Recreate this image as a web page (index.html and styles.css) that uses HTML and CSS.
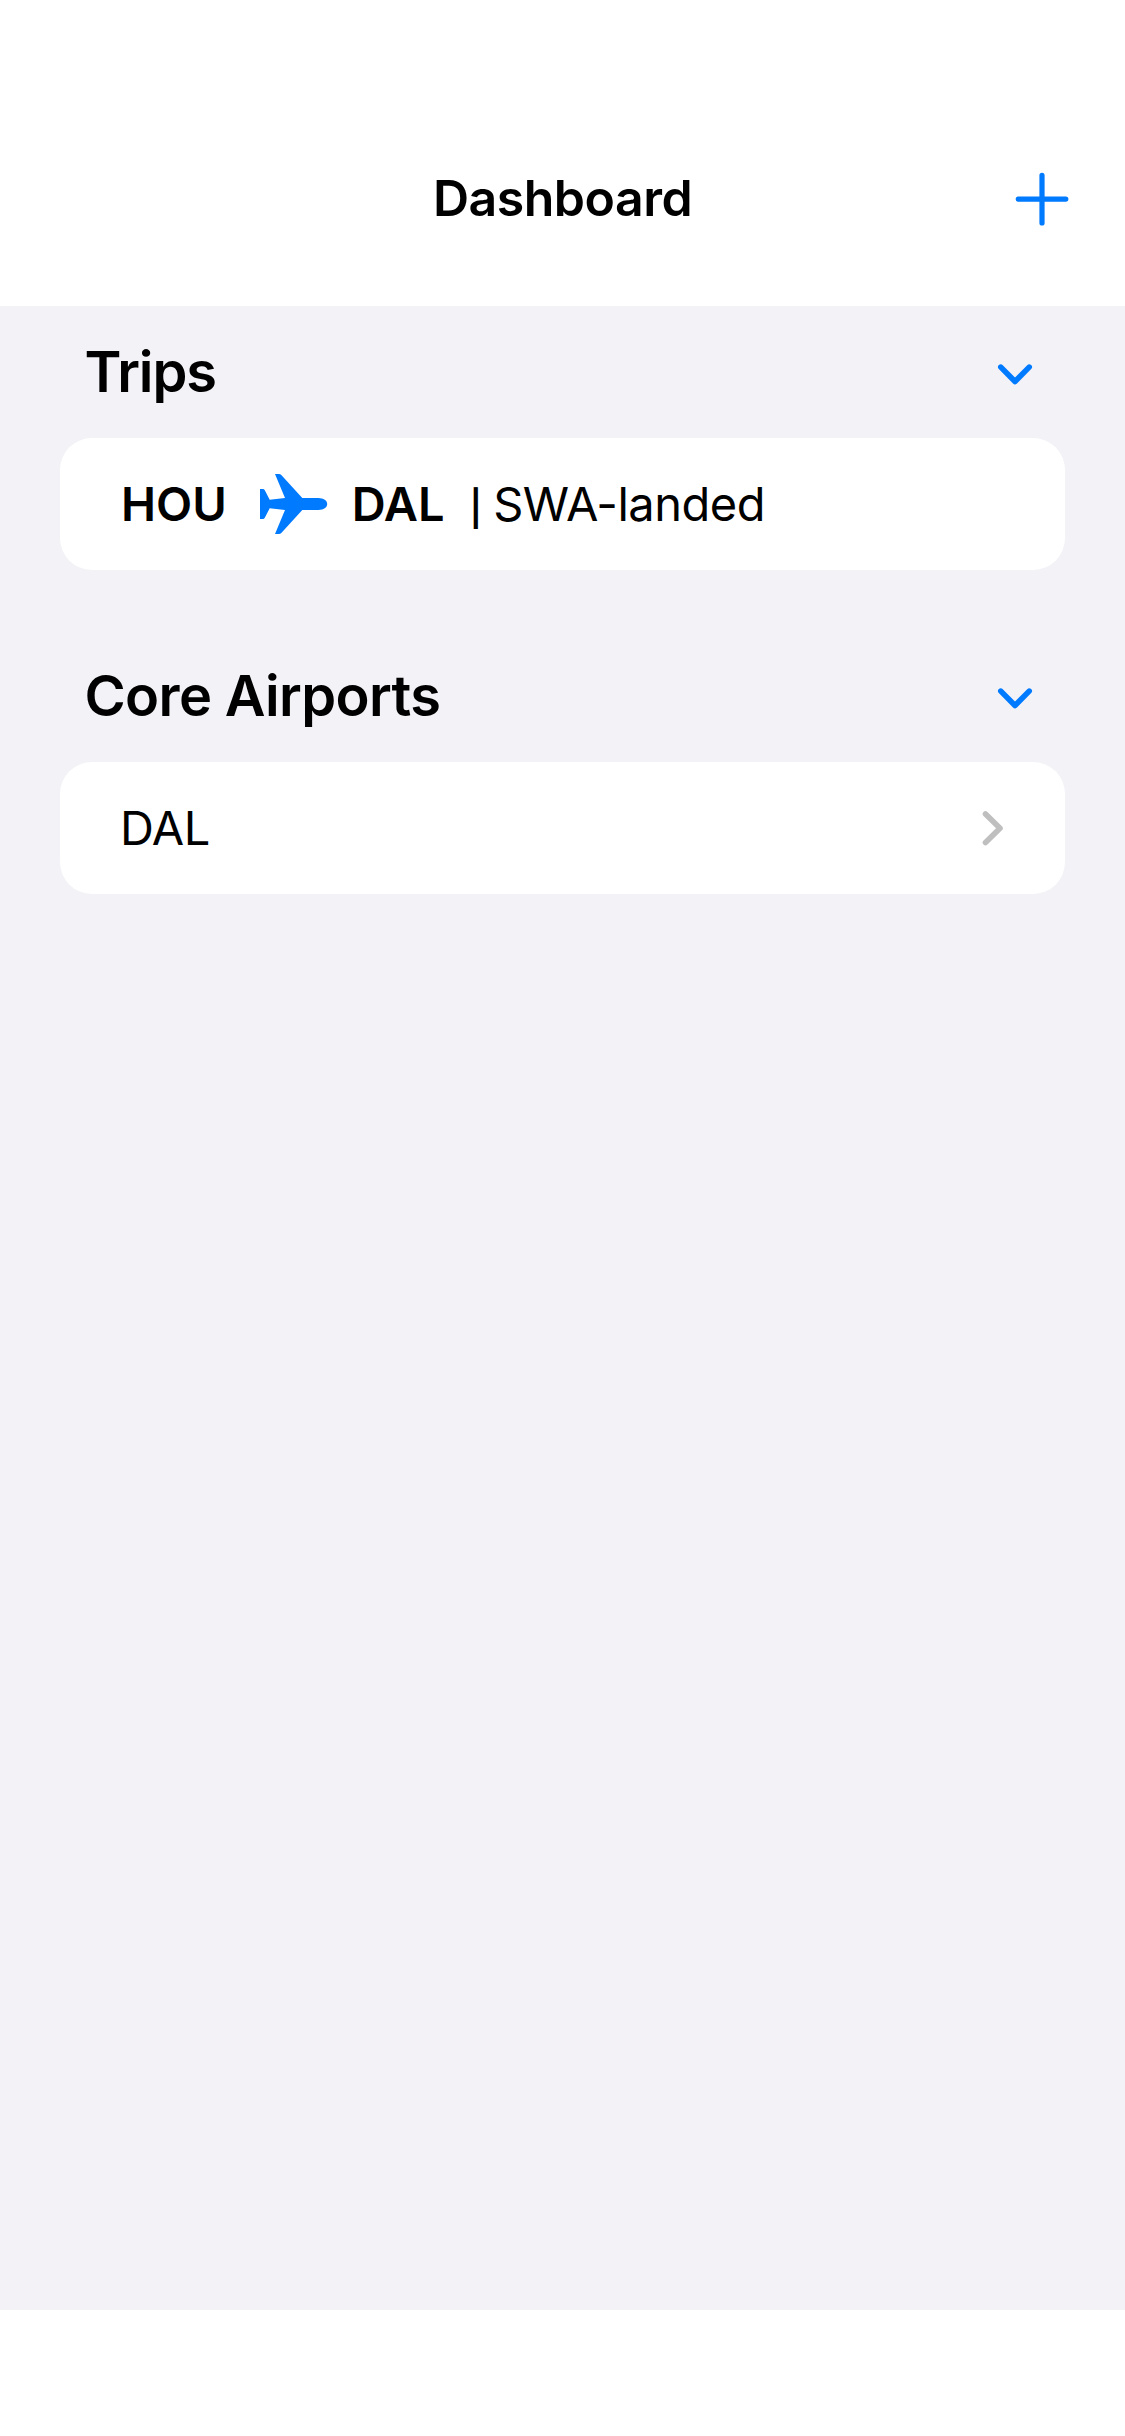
FILE: index.html
```html
<!DOCTYPE html>
<html lang="en">
<head>
<meta charset="utf-8">
<title>Dashboard</title>
<link rel="stylesheet" href="styles.css">
</head>
<body>
<div class="screen">
  <header class="nav">
    <span></span>
    <h1 class="nav-title">Dashboard</h1>
    <button class="nav-add" aria-label="Add">
      <svg width="54" height="54" viewBox="0 0 54 54"><path d="M27 3.300v47.600M3.200 27.100h47.600"/></svg>
    </button>
  </header>
  <main class="content">
    <section>
      <div class="section-head">
        <h2 class="section-title trips">Trips</h2>
        <svg class="chevron" width="36" height="24" viewBox="0 0 36 24"><path d="M3.800 4.100 18 18.500 32.200 4.100"/></svg>
      </div>
      <div class="card">
        <div class="trip">
          <span class="code">HOU</span>
          <svg class="plane" width="68" height="60" viewBox="0 0 68 60"><path d="M15 0h4q1.300 0 2.300 1L42.300 24H58.300C63.500 24.200 67.200 26.500 67.200 30S63.500 35.800 58.300 36H42.300L21.300 59q-1 1-2.300 1H15L25 36 9.700 34.300 4.800 43.700Q4 45 3 45H0V15H3Q4 15 4.800 16.300L9.700 25.700 25 24Z"/></svg>
          <span class="code">DAL</span>
          <span class="divider">|</span>
          <span class="status">SWA-landed</span>
        </div>
      </div>
    </section>
    <section>
      <div class="section-head">
        <h2 class="section-title">Core Airports</h2>
        <svg class="chevron" width="36" height="24" viewBox="0 0 36 24"><path d="M3.800 4.100 18 18.500 32.200 4.100"/></svg>
      </div>
      <div class="card">
        <span class="airport">DAL</span>
        <svg class="disclosure" width="24" height="36" viewBox="0 0 24 36"><path d="M4.500 4 19 18.300 4.500 32.600"/></svg>
      </div>
    </section>
  </main>
</div>
</body>
</html>
```
FILE: styles.css
```css
* {
  box-sizing: border-box;
}

body {
  margin: 0;
  background: #fff;
  color: #000;
  font-family: "Inter", sans-serif;
}

.screen {
  display: flex;
  flex-direction: column;
  height: 2436px;
  padding-bottom: 126px;
}

.nav {
  display: grid;
  flex: none;
  grid-template-columns: 1fr auto 1fr;
  align-content: center;
  align-items: center;
  height: 306px;
  padding: 92px 56px 2px;
}

.nav-title {
  margin: 0;
  font-size: 50px;
  font-weight: 600;
  letter-spacing: -0.5px;
  line-height: 60px;
}

.nav-add {
  justify-self: end;
  margin-top: 2px;
  padding: 0;
  border: 0;
  background: none;
  line-height: 0;
}

.nav-add svg {
  fill: none;
  stroke: #007aff;
  stroke-width: 5.2;
  stroke-linecap: round;
}

.content {
  display: flex;
  flex: 1;
  flex-direction: column;
  gap: 60px;
  padding: 0 60px;
  background: #f2f2f7;
}

.section-head {
  display: flex;
  align-items: center;
  justify-content: space-between;
  height: 132px;
  padding: 0 32px 0 24.5px;
}

.section-title {
  margin: 0;
  font-size: 56px;
  font-weight: 600;
  letter-spacing: -0.65px;
  line-height: 68px;
}

.section-title.trips {
  letter-spacing: -1.1px;
}

.chevron,
.disclosure {
  fill: none;
  stroke: #007aff;
  stroke-width: 5.6;
  stroke-linecap: round;
  stroke-linejoin: round;
}

.chevron {
  margin-top: 6px;
}

.disclosure {
  stroke: #bfbfbf;
}

.card {
  display: flex;
  align-items: center;
  justify-content: space-between;
  height: 132px;
  padding: 0 60px;
  border-radius: 32px;
  background: #fff;
  font-size: 47px;
  line-height: 58px;
}

.trip {
  display: flex;
  align-items: baseline;
  line-height: 60px;
}

.code {
  margin-left: 1px;
  font-weight: 600;
}

.plane {
  align-self: center;
  margin: 0 23px 0 33px;
  fill: #007aff;
}

.divider {
  margin: 0 11px 0 25px;
  font-size: 35px;
  font-weight: 600;
  line-height: 1;
}

.status {
  letter-spacing: -0.5px;
}

.airport {
  letter-spacing: -0.5px;
}
```
